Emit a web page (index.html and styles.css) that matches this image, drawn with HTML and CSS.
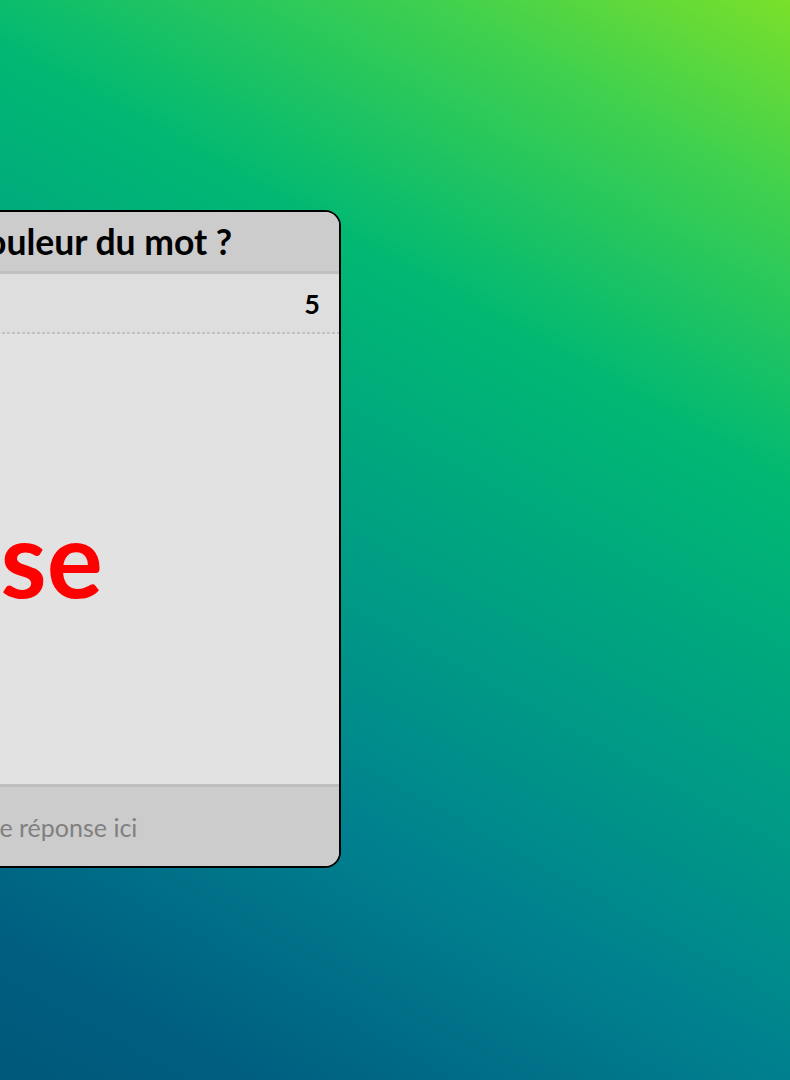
FILE: index.html
```html
<!DOCTYPE html>
<html lang="fr">
<head>
<meta charset="utf-8">
<title>Couleur du mot</title>
<link rel="stylesheet" href="styles.css">
</head>
<body>
  <main class="stage">
    <section class="card">
      <header class="card-head">
        <h1 class="question">Quelle est la couleur du mot ?</h1>
      </header>
      <div class="score-row">
        <span class="score">5</span>
      </div>
      <div class="word-area">
        <span class="word">Rose</span>
      </div>
      <footer class="card-foot">
        <input class="answer" type="text" placeholder="Entrez votre réponse ici">
      </footer>
    </section>
  </main>
</body>
</html>
```

FILE: styles.css
```css
html, body {
  margin: 0;
  padding: 0;
}

*, *::before, *::after {
  box-sizing: border-box;
}

body {
  width: 790px;
  height: 1080px;
  overflow: hidden;
  font-family: "Lato", "Noto Sans", sans-serif;
  background: linear-gradient(29deg,
    #00587a 0px,
    #005f80 130px,
    #00808f 383px,
    #009a86 600px,
    #00b873 900px,
    #3fd04f 1150px,
    #7ae02a 1328px);
}

.stage {
  display: flex;
  padding-top: 210px;
}

.card {
  flex: none;
  width: 651px;
  margin-left: -310px;
  border: 2px solid #000;
  border-radius: 16px;
  overflow: hidden;
  display: flex;
  flex-direction: column;
  background: #e2e2e2;
}

.card-head {
  height: 62px;
  background: #cccccc;
  border-bottom: 3px solid #bfbfbf;
  padding: 0 34px 0 0;
  display: flex;
  align-items: center;
  justify-content: center;
}

.question {
  margin: 0;
  font-size: 35.5px;
  font-weight: 700;
  color: #000;
  text-align: center;
  white-space: nowrap;
}

.score-row {
  height: 60px;
  background:
    repeating-linear-gradient(to right, #c3c3c3 0 3px, transparent 3px 5px) left bottom / 100% 2px no-repeat,
    #dedede;
  padding: 0 19px 2px;
  display: flex;
  align-items: center;
  justify-content: flex-end;
}

.score {
  font-size: 27px;
  font-weight: 700;
  color: #000;
}

.word-area {
  height: 453px;
  background: #e2e2e2;
  border-bottom: 3px solid #bdbdbd;
  padding-right: 52px;
  display: flex;
  align-items: center;
  justify-content: center;
}

.word {
  font-size: 105px;
  font-weight: 700;
  color: #ff0000;
  line-height: 1;
  margin-bottom: 4px;
  white-space: nowrap;
}

.card-foot {
  height: 79px;
  background: #cccccc;
  display: flex;
  align-items: center;
}

.answer {
  flex: 1;
  height: 100%;
  border: none;
  outline: none;
  background: transparent;
  font-family: "Lato", "Noto Sans", sans-serif;
  font-size: 25px;
  text-align: center;
  color: #333;
  padding: 0 14px 0 0;
}

.answer::placeholder {
  color: #808080;
}
```
